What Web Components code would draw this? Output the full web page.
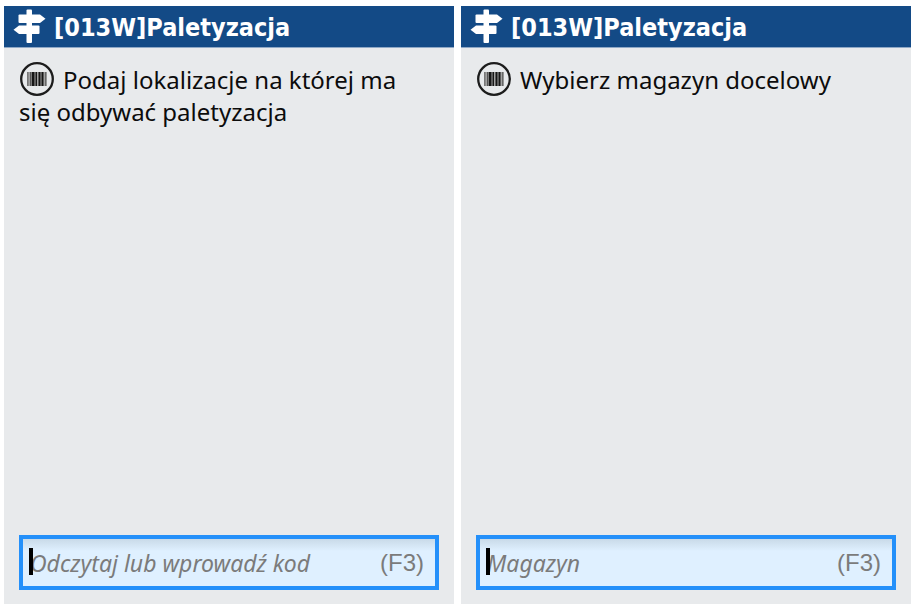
<!DOCTYPE html>
<html lang="pl">
<head>
<meta charset="utf-8">
<meta name="viewport" content="width=device-width, initial-scale=1">
<title>[013W]Paletyzacja</title>
<style>
  html, body { height: 100%; }
  body {
    margin: 0;
    background: #ffffff;
    font-family: "Noto Sans", "Open Sans", sans-serif;
  }
</style>
</head>
<body>
<screen-pair>
  <terminal-screen heading="[013W]Paletyzacja">
    <scan-prompt>Podaj lokalizacje na której ma się odbywać paletyzacja</scan-prompt>
    <code-field slot="footer" label="Odczytaj lub wprowadź kod" hotkey="(F3)"></code-field>
  </terminal-screen>
  <terminal-screen heading="[013W]Paletyzacja">
    <scan-prompt>Wybierz magazyn docelowy</scan-prompt>
    <code-field slot="footer" label="Magazyn" hotkey="(F3)"></code-field>
  </terminal-screen>
</screen-pair>

<script>
class ScreenPair extends HTMLElement {
  connectedCallback() {
    this.attachShadow({ mode: 'open' });
    this.shadowRoot.innerHTML = `
      <style>
        :host {
          display: grid;
          grid-template-columns: 1fr 1fr;
          gap: 7px;
          box-sizing: border-box;
          min-height: 100%;
          padding: 6px 3px 0 4px;
        }
      </style>
      <slot></slot>
    `;
  }
}

class TerminalScreen extends HTMLElement {
  connectedCallback() {
    this.attachShadow({ mode: 'open' });
    this.shadowRoot.innerHTML = `
      <style>
        :host {
          display: flex;
          flex-direction: column;
          min-width: 0;
          background: #e8eaec;
        }
        header {
          display: flex;
          align-items: center;
          gap: 8px;
          height: 41px;
          padding: 0 9px;
          background: #134a86;
          border-bottom: 1px solid #8fa8c6;
          color: #ffffff;
        }
        header svg {
          flex: none;
          width: 33px;
          height: 35px;
        }
        h1 {
          margin: 0;
          padding-top: 2px;
          font: bold 25px/32px "DejaVu Sans Condensed", "Noto Sans", sans-serif;
          white-space: nowrap;
        }
        main {
          flex: 1;
          padding: 16px 24px 15px 15px;
        }
        footer {
          padding: 0 15px 14px;
        }
      </style>
      <header>
        <svg viewBox="0 0 33 35" fill="currentColor" aria-hidden="true">
          <rect x="13.500" y="0.500" width="5.500" height="33.500" rx="1"></rect>
          <path d="M6.500 5.500h20.500l5.500 4.300-5.500 4.300H6.500a1 1 0 0 1-1-1V6.500a1 1 0 0 1 1-1z"></path>
          <path d="M25.500 16.500H6L.5 20.700 6 25h19.500a1 1 0 0 0 1-1v-6.500a1 1 0 0 0-1-1z"></path>
        </svg>
        <h1></h1>
      </header>
      <main><slot></slot></main>
      <footer><slot name="footer"></slot></footer>
    `;
    this.shadowRoot.querySelector('h1').textContent = this.getAttribute('heading');
  }
}

class ScanPrompt extends HTMLElement {
  connectedCallback() {
    this.attachShadow({ mode: 'open' });
    this.shadowRoot.innerHTML = `
      <style>
        :host { display: block; }
        p {
          margin: 0;
          color: #0c0c0c;
          font-size: 24px;
          line-height: 32px;
        }
        svg {
          width: 36px;
          height: 36px;
          margin: -3px 8px -1px 0;
          vertical-align: top;
        }
      </style>
      <p><svg viewBox="0 0 36 36" aria-hidden="true">
        <circle cx="18" cy="18" r="15.800" fill="none" stroke="#1c1c1c" stroke-width="2.300"></circle>
        <rect x="8" y="11" width="19.500" height="14" fill="#a2a2a2"></rect>
        <g fill="#161616">
          <rect x="8" y="11" width="1.500" height="14" fill="#777777"></rect>
          <rect x="11" y="11" width="1.500" height="14" fill="#555555"></rect>
          <rect x="13" y="11" width="2.500" height="14"></rect>
          <rect x="16.500" y="11" width="1.500" height="14"></rect>
          <rect x="19.500" y="11" width="2" height="14"></rect>
          <rect x="22.500" y="11" width="2" height="14"></rect>
          <rect x="26" y="11" width="1.500" height="14" fill="#666666"></rect>
        </g>
      </svg><slot></slot></p>
    `;
  }
}

class CodeField extends HTMLElement {
  connectedCallback() {
    this.attachShadow({ mode: 'open' });
    this.shadowRoot.innerHTML = `
      <style>
        :host { display: block; }
        .field {
          position: relative;
          display: flex;
          align-items: center;
          height: 47px;
          padding: 0 11px 0 7px;
          border: 4px solid #2490fa;
          background: linear-gradient(#c9dae8, #dff0ff 12px);
        }
        /* text cursor, drawn over the start of the input */
        .cursor {
          position: absolute;
          left: 6px;
          top: 9px;
          width: 4px;
          height: 27px;
          background: #000000;
        }
        input {
          flex: 1;
          min-width: 0;
          height: 32px;
          margin: 0;
          padding: 0;
          border: 0;
          outline: 0;
          background: transparent;
          color: #0c0c0c;
          caret-color: transparent;
          font: italic 23px/32px "Noto Sans", "Open Sans", sans-serif;
        }
        input::placeholder { color: #7b7b7b; opacity: 1; }
        .hotkey {
          color: #7b7b7b;
          font: 24px/32px "Liberation Sans", sans-serif;
        }
      </style>
      <div class="field">
        <input type="text" autocomplete="off">
        <span class="cursor"></span>
        <span class="hotkey"></span>
      </div>
    `;
    const input = this.shadowRoot.querySelector('input');
    input.placeholder = this.getAttribute('label');
    input.setAttribute('aria-label', this.getAttribute('label'));
    this.shadowRoot.querySelector('.hotkey').textContent = this.getAttribute('hotkey');
  }
}

customElements.define('screen-pair', ScreenPair);
customElements.define('terminal-screen', TerminalScreen);
customElements.define('scan-prompt', ScanPrompt);
customElements.define('code-field', CodeField);
</script>
</body>
</html>
